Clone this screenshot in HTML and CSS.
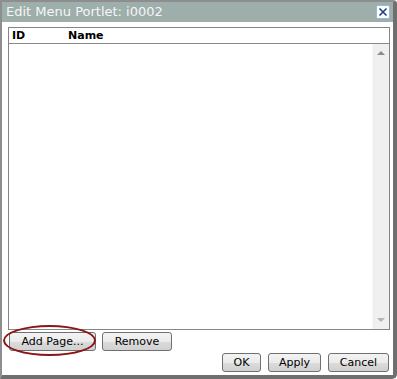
FILE: index.html
```html
<!DOCTYPE html>
<html>
<head>
<meta charset="utf-8"/>
<title>Edit Menu Portlet</title>
<link rel="stylesheet" href="styles.css">
</head>
<body>
<div class="m-dialog">
    <div class="m-title">
        <span class="u-title">Edit Menu Portlet: i0002</span>
        <button class="u-close" title="Close">
            <svg width="10" height="10" viewBox="0 0 10 10"><path d="M1.5 1.5L8.5 8.5M8.5 1.5L1.5 8.5" stroke="#1f3f86" stroke-width="1.6" fill="none"/></svg>
        </button>
    </div>
    <div class="m-body">
        <div class="m-list">
            <div class="u-head"><span class="c-id">ID</span><span class="c-name">Name</span></div>
            <div class="u-rows">
                <div class="u-items"></div>
                <div class="u-scroll">
                    <span class="u-arrow up"></span>
                    <span class="u-arrow down"></span>
                </div>
            </div>
        </div>
        <div class="m-actions">
            <button class="u-btn w-add">Add Page...</button>
            <button class="u-btn w-remove">Remove</button>
            <span class="u-mark"></span>
        </div>
        <div class="m-foot">
            <button class="u-btn w-ok">OK</button>
            <button class="u-btn w-apply">Apply</button>
            <button class="u-btn w-cancel">Cancel</button>
        </div>
    </div>
</div>
</body>
</html>
```
FILE: styles.css
```css
/* reset */
html,body,div,span,button{margin:0;padding:0;}
body{background:#fff;font:11px/1 "DejaVu Sans",Verdana,sans-serif;color:#000;}
button{font:inherit;cursor:pointer;}

.m-dialog{box-sizing:border-box;width:397px;height:379px;display:flex;flex-direction:column;border:2px solid #8e8e8e;border-right:4px solid #6f6f6f;border-bottom:4px solid #6f6f6f;border-radius:0 4px 5px 0;background:#fff;}
.m-title{height:20px;flex:none;display:flex;align-items:center;justify-content:space-between;background:#9eaeaa;padding:0 3px 0 4px;}
.u-title{font-size:13px;color:#f4f6f6;line-height:20px;}
.u-close{width:14px;height:14px;display:flex;align-items:center;justify-content:center;background:#fff;border:1px solid #9ab8dc;border-radius:2px;}
.u-close svg{display:block;}

.m-body{flex:1;display:flex;flex-direction:column;padding:5px 3px 3px 6px;min-height:0;}
.m-list{flex:1;display:flex;flex-direction:column;border:1px solid #858585;min-height:0;}
.u-head{height:15px;flex:none;display:flex;align-items:center;border-bottom:1px solid #8a8a8a;padding-left:3px;font-weight:bold;font-size:11px;}
.u-head .c-id{width:56px;}
.u-rows{flex:1;display:flex;min-height:0;}
.u-items{flex:1;}
.u-scroll{width:16px;background:#f0f0f0;border-left:1px solid #f6f6f6;display:flex;flex-direction:column;justify-content:space-between;align-items:center;padding:7px 0 7px;}
.u-arrow{width:0;height:0;border-left:4px solid transparent;border-right:4px solid transparent;}
.u-arrow.up{border-bottom:4px solid #8c8c8c;}
.u-arrow.down{border-top:4px solid #b4b4b4;}

.u-btn{box-sizing:border-box;height:19px;border:1px solid #707070;border-radius:3px;background:linear-gradient(#f3f3f3 0,#ebebeb 50%,#dcdcdc 51%,#d0d0d0 100%);color:#000;font-size:11px;padding:0;}
.m-actions{position:relative;flex:none;display:flex;gap:6px;margin-top:2px;padding-left:1px;}
.w-add{width:87px;}
.w-remove{width:70px;}
.u-mark{position:absolute;left:-5px;top:-7px;width:93px;height:31px;box-sizing:border-box;border:2px solid #8b1515;border-radius:50%;}

.m-foot{flex:none;display:flex;justify-content:flex-end;gap:7px;margin-top:2px;padding-right:1px;}
.w-ok{width:39px;}
.w-apply{width:53px;}
.w-cancel{width:61px;}
```
